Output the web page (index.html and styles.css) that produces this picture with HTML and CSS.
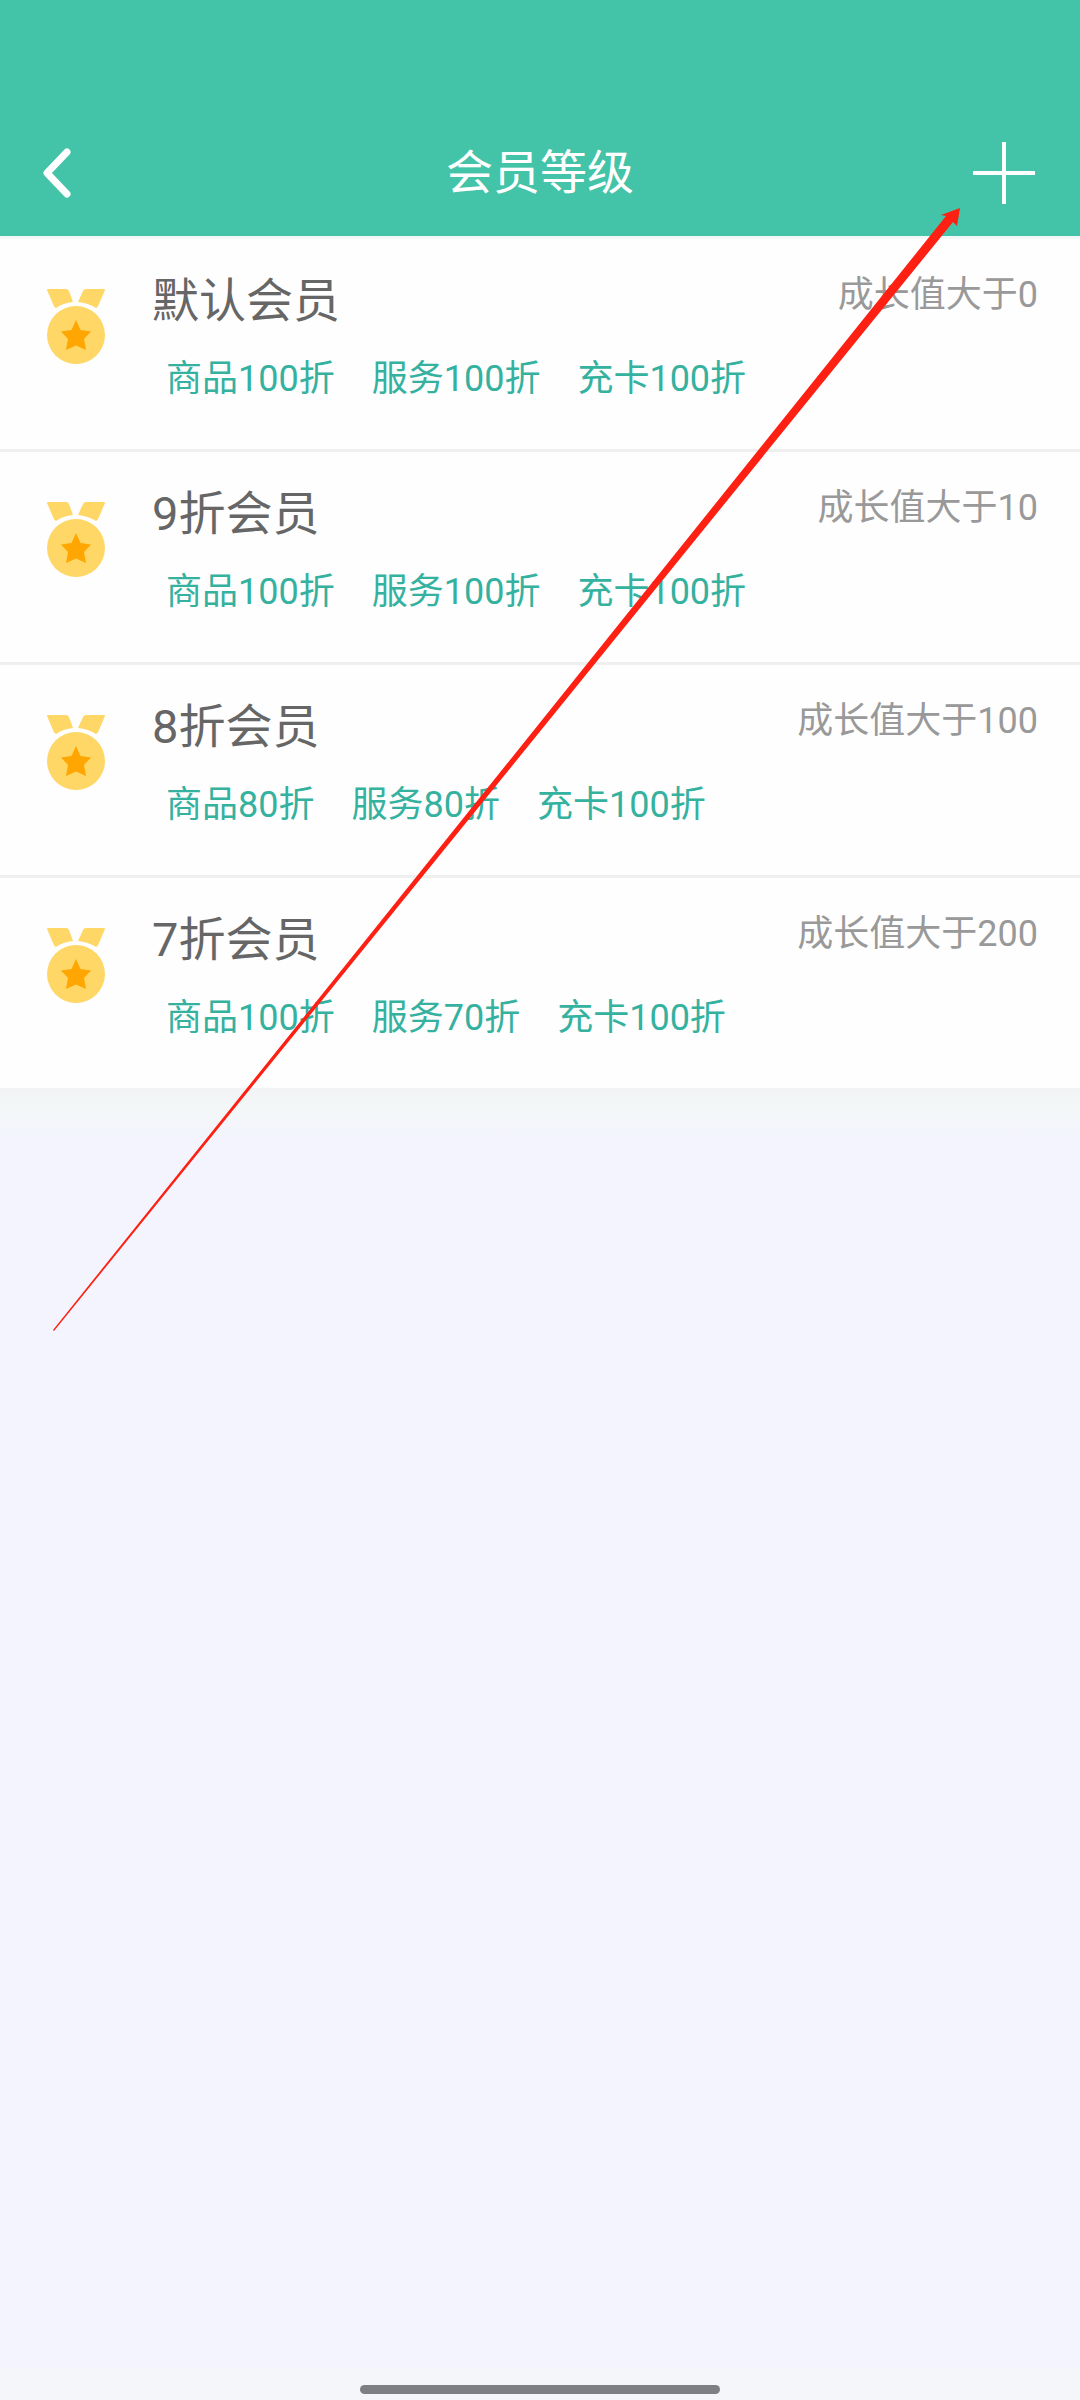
FILE: index.html
```html
<!DOCTYPE html>
<html lang="zh-CN">
<head>
<meta charset="utf-8">
<meta name="viewport" content="width=device-width, initial-scale=1">
<title>会员等级</title>
<link rel="stylesheet" href="styles.css">
</head>
<body>
<svg class="symbols" aria-hidden="true">
  <symbol id="medal" viewBox="0 0 58 76">
    <path class="medal-body" d="M0 1Q0 0 1 0H19Q21 0 22 2L26 13Q16 14 9 19Q7 18 6 15ZM58 1Q58 0 57 0H39Q37 0 36 2L31 13Q41 14 49 19Q51 18 52 15Z"/>
    <circle class="medal-body" cx="29" cy="46" r="29"/>
    <path class="medal-star" d="M29 31L33.500 41L44 42.500L37 50L39 61L29 56.500L19 61L21 50L14 42.500L24.500 41Z"/>
  </symbol>
</svg>
<header class="bar">
  <button class="bar-button" type="button" aria-label="返回">
    <svg class="back-icon" viewBox="0 0 28 50"><path d="M24 4L4 25L24 46"/></svg>
  </button>
  <h1 class="bar-title">会员等级</h1>
  <button class="bar-button bar-button-add" type="button" aria-label="添加">
    <svg class="add-icon" viewBox="0 0 62 62"><path d="M31 0V62M0 31H62"/></svg>
  </button>
</header>
<main class="content">
  <ul class="levels">
    <li class="level">
      <svg class="medal" aria-hidden="true"><use href="#medal"/></svg>
      <div class="level-info">
        <h2 class="level-name">默认会员</h2>
        <p class="discounts"><span>商品100折</span><span>服务100折</span><span>充卡100折</span></p>
      </div>
      <p class="growth">成长值大于0</p>
    </li>
    <li class="level">
      <svg class="medal" aria-hidden="true"><use href="#medal"/></svg>
      <div class="level-info">
        <h2 class="level-name">9折会员</h2>
        <p class="discounts"><span>商品100折</span><span>服务100折</span><span>充卡100折</span></p>
      </div>
      <p class="growth">成长值大于10</p>
    </li>
    <li class="level">
      <svg class="medal" aria-hidden="true"><use href="#medal"/></svg>
      <div class="level-info">
        <h2 class="level-name">8折会员</h2>
        <p class="discounts"><span>商品80折</span><span>服务80折</span><span>充卡100折</span></p>
      </div>
      <p class="growth">成长值大于100</p>
    </li>
    <li class="level">
      <svg class="medal" aria-hidden="true"><use href="#medal"/></svg>
      <div class="level-info">
        <h2 class="level-name">7折会员</h2>
        <p class="discounts"><span>商品100折</span><span>服务70折</span><span>充卡100折</span></p>
      </div>
      <p class="growth">成长值大于200</p>
    </li>
  </ul>
</main>
<footer class="gesture-area"><div class="gesture-handle"></div></footer>
<svg class="pointer" viewBox="0 0 908 1123" aria-hidden="true">
  <path d="M907 0L904 18L900 14L1 1123L0 1122L893 8L888 7Z"/>
</svg>
</body>
</html>
```
FILE: styles.css
```css
* {
  box-sizing: border-box;
}

body {
  position: relative;
  display: flex;
  flex-direction: column;
  min-height: 100vh;
  margin: 0;
  background: #f3f4fd;
  color: #666;
  font-family: Roboto, "Noto Sans CJK SC", sans-serif;
}

h1, h2, p, ul {
  margin: 0;
  padding: 0;
  font-weight: 400;
}

.symbols {
  position: absolute;
  width: 0;
  height: 0;
}

.bar {
  display: grid;
  grid-template-columns: 120px 1fr 120px;
  align-items: center;
  padding-top: 110px;
  height: 236px;
  background: #43c3a7;
  color: #fff;
}

.bar-title {
  font-size: 47px;
  line-height: 64px;
  text-align: center;
}

.bar-button {
  display: flex;
  align-items: center;
  height: 126px;
  padding: 0 45px 0 43px;
  border: 0;
  background: none;
  color: inherit;
}

.bar-button-add {
  justify-content: flex-end;
}

.back-icon,
.add-icon {
  flex: none;
  fill: none;
  stroke: currentColor;
}

.back-icon {
  width: 28px;
  height: 50px;
  stroke-width: 7;
  stroke-linecap: round;
  stroke-linejoin: round;
}

.add-icon {
  width: 62px;
  height: 62px;
  stroke-width: 4;
}

.content {
  flex: 1;
}

.content::after {
  content: "";
  display: block;
  height: 48px;
  background: linear-gradient(#f2f4f5, #f4f7f8 40%, #f3f4fd);
}

.levels {
  list-style: none;
  background: #fefefe;
  border-top: 3px solid #f2f8f8;
}

.level {
  display: flex;
  align-items: flex-start;
  height: 213px;
  padding: 32px 42px 0 47px;
  border-bottom: 3px solid #efefef;
}

.level:last-child {
  border-bottom-color: #f1f3f4;
}

.medal {
  flex: none;
  width: 58px;
  height: 76px;
  margin: 18px 47px 0 0;
}

.medal-body {
  fill: #fed766;
}

.medal-star {
  fill: #ffa602;
}

.level-info {
  flex: 1;
}

.level-name {
  font-size: 47px;
  line-height: 60px;
}

.discounts {
  display: flex;
  gap: 37px;
  padding: 24px 0 0 14px;
  color: #35b1a0;
  font-size: 36px;
  line-height: 48px;
}

.growth {
  color: #999;
  font-size: 36px;
  line-height: 48px;
}

.gesture-area {
  display: flex;
  justify-content: center;
  padding: 17px 0 6px;
  background: #f4f6fa;
}

.gesture-handle {
  width: 33.333%;
  height: 9px;
  border-radius: 5px;
  background: #7d7f82;
}

.pointer {
  position: absolute;
  top: 208px;
  left: 53px;
  width: 908px;
  height: 1123px;
  fill: #fe2012;
  pointer-events: none;
}
```
